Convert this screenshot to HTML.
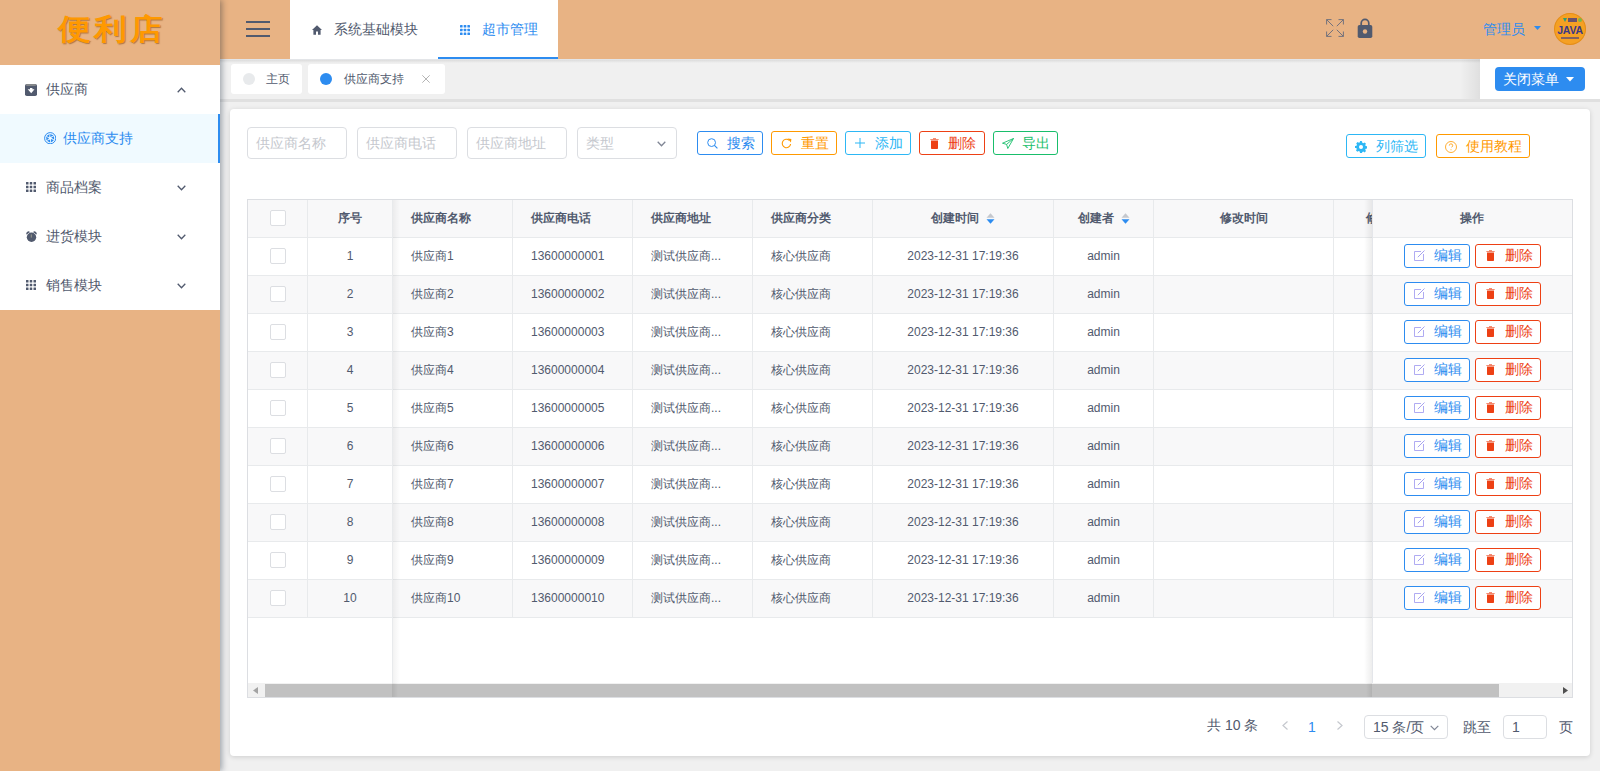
<!DOCTYPE html>
<html><head><meta charset="utf-8">
<style>
*{box-sizing:border-box;margin:0;padding:0}
html,body{width:1600px;height:771px;overflow:hidden}
body{position:relative;background:#f0f0f0;font-family:"Liberation Sans",sans-serif;font-size:14px;color:#515a6e}
.a{position:absolute}
#side{left:0;top:0;width:220px;height:771px;background:#e8b384;z-index:5;box-shadow:2px 0 6px rgba(0,21,41,.35)}
#logo{left:0;top:0;width:220px;height:65px;text-align:center;color:#ff9900;font-size:29px;font-weight:bold;letter-spacing:3px;text-indent:3px;line-height:58px;transform:scaleX(1.12);text-shadow:1px 1px 1px rgba(120,60,0,.5)}
#menu{left:0;top:65px;width:220px;height:245px;background:#fff}
.mi{position:absolute;left:0;width:220px;height:49px;line-height:49px;color:#515a6e}
.mi .t{position:absolute;left:46px;top:0}
.mi .ic{position:absolute;left:26px;top:19px;width:11px;height:11px}
.mi .chev{position:absolute;left:177px;top:22px;width:9px;height:6px}
.mi.act{background:#f0faff;color:#2d8cf0}
.mi.act::after{content:"";position:absolute;right:0;top:0;width:2px;height:49px;background:#2d8cf0}
#head{left:220px;top:0;width:1380px;height:59px;background:#e8b384;z-index:3}
#tagbar{left:220px;top:59px;width:1380px;height:43px;background:#f0f0f0;z-index:2}
.card{left:230px;top:109px;width:1360px;height:647px;background:#fff;border-radius:4px;box-shadow:0 1px 5px rgba(0,0,0,.15)}
.inp{border:1px solid #dcdee2;border-radius:4px;background:#fff}
.ph{left:8px;top:0;line-height:30px;color:#c5c8ce;font-size:14px}
.btn{height:24px;border:1px solid;border-radius:3px;background:#fff;line-height:22px;font-size:14px}
.tbl{border:1px solid #dcdee2;background:#fff;overflow:hidden;font-size:12px}
.hl{left:0;width:1324px;height:1px;background:#e8eaec}
.vl{width:1px;background:#e8eaec}
.cell{height:37px;line-height:36px;white-space:nowrap;overflow:visible;color:#515a6e}
.th{font-weight:bold;line-height:37px}
.chk{width:16px;height:16px;border:1px solid #dcdee2;border-radius:2px;background:#fff}
</style></head><body>
<div id="side" class="a">
  <div id="logo" class="a">便利店</div>
  <div id="menu" class="a">
    <div class="mi" style="top:0">
      <svg class="ic" viewBox="0 0 12 12" style="left:25px;top:19px;width:12px;height:12px"><rect x="0" y="0" width="12" height="12" rx="1.8" fill="#515a6e"/><rect x="1.2" y="0.3" width="9.6" height="1.4" fill="#9a9a96"/><path d="M5 4h2.4v1.3h2.1L6.2 9.2 2.7 5.3h2.3z" fill="#fff"/></svg>
      <span class="t">供应商</span>
      <svg class="chev" viewBox="0 0 9 6"><path d="M0.7 5.2L4.5 1.3 8.3 5.2" fill="none" stroke="#515a6e" stroke-width="1.3"/></svg>
    </div>
    <div class="mi act" style="top:49px">
      <svg class="ic" viewBox="0 0 12.4 12.4" style="left:44px;top:18px;width:12.4px;height:12.4px"><circle cx="6.2" cy="6.2" r="5.6" fill="none" stroke="#2d8cf0" stroke-width="1"/><path d="M6.20 5.00L6.35 1.90 9.59 3.55zM7.24 5.60L10.00 4.18 10.19 7.81zM7.24 6.80L9.85 8.48 6.80 10.46zM6.20 7.40L6.05 10.50 2.81 8.85zM5.16 6.80L2.40 8.22 2.21 4.59zM5.16 5.60L2.55 3.92 5.60 1.94z" fill="#2d8cf0"/></svg>
      <span class="t" style="left:63px">供应商支持</span>
    </div>
    <div class="mi" style="top:98px">
      <svg class="ic" viewBox="0 0 10 10" style="width:10px;height:10px;top:19px"><g fill="#515a6e"><rect x="0" y="0" width="2.5" height="2.5" rx=".3"/><rect x="3.75" y="0" width="2.5" height="2.5" rx=".3"/><rect x="7.5" y="0" width="2.5" height="2.5" rx=".3"/><rect x="0" y="3.75" width="2.5" height="2.5" rx=".3"/><rect x="3.75" y="3.75" width="2.5" height="2.5" rx=".3"/><rect x="7.5" y="3.75" width="2.5" height="2.5" rx=".3"/><rect x="0" y="7.5" width="2.5" height="2.5" rx=".3"/><rect x="3.75" y="7.5" width="2.5" height="2.5" rx=".3"/><rect x="7.5" y="7.5" width="2.5" height="2.5" rx=".3"/></g></svg>
      <span class="t">商品档案</span>
      <svg class="chev" viewBox="0 0 9 6"><path d="M0.7 0.8L4.5 4.7 8.3 0.8" fill="none" stroke="#515a6e" stroke-width="1.3"/></svg>
    </div>
    <div class="mi" style="top:147px">
      <svg class="ic" viewBox="0 0 11 11" style="top:19px;left:25.5px;width:11px;height:11px"><circle cx="5.5" cy="6.3" r="4.7" fill="#515a6e"/><path d="M0.3 3.2A2.3 2.3 0 0 1 3.5 0.6L3.6 1.5A5 5 0 0 0 1.1 3.5zM10.7 3.2A2.3 2.3 0 0 0 7.5 0.6L7.4 1.5A5 5 0 0 1 9.9 3.5z" fill="#515a6e"/><path d="M5.3 3.4v3.2" stroke="#b8b49a" stroke-width=".7"/></svg>
      <span class="t">进货模块</span>
      <svg class="chev" viewBox="0 0 9 6"><path d="M0.7 0.8L4.5 4.7 8.3 0.8" fill="none" stroke="#515a6e" stroke-width="1.3"/></svg>
    </div>
    <div class="mi" style="top:196px">
      <svg class="ic" viewBox="0 0 10 10" style="width:10px;height:10px;top:19px"><g fill="#515a6e"><rect x="0" y="0" width="2.5" height="2.5" rx=".3"/><rect x="3.75" y="0" width="2.5" height="2.5" rx=".3"/><rect x="7.5" y="0" width="2.5" height="2.5" rx=".3"/><rect x="0" y="3.75" width="2.5" height="2.5" rx=".3"/><rect x="3.75" y="3.75" width="2.5" height="2.5" rx=".3"/><rect x="7.5" y="3.75" width="2.5" height="2.5" rx=".3"/><rect x="0" y="7.5" width="2.5" height="2.5" rx=".3"/><rect x="3.75" y="7.5" width="2.5" height="2.5" rx=".3"/><rect x="7.5" y="7.5" width="2.5" height="2.5" rx=".3"/></g></svg>
      <span class="t">销售模块</span>
      <svg class="chev" viewBox="0 0 9 6"><path d="M0.7 0.8L4.5 4.7 8.3 0.8" fill="none" stroke="#515a6e" stroke-width="1.3"/></svg>
    </div>
  </div>
</div>

<div id="head" class="a">
  <div class="a" style="left:26px;top:21px;width:24px;height:2.2px;background:#515a6e"></div>
  <div class="a" style="left:26px;top:28px;width:24px;height:2.2px;background:#515a6e"></div>
  <div class="a" style="left:26px;top:35px;width:24px;height:2.2px;background:#515a6e"></div>
  <div class="a" style="left:70px;top:0;width:268px;height:59px;background:#fff">
    <svg class="a" style="left:22px;top:25px" width="10" height="10" viewBox="0 0 10 10"><path d="M5 0.3L0 5h1.4v4.7h2.6V6.6h2v3.1h2.6V5H10z" fill="#515a6e"/></svg>
    <span class="a" style="left:44px;top:0;line-height:58px;color:#515a6e">系统基础模块</span>
    <svg class="a" style="left:170px;top:25px" width="10" height="10" viewBox="0 0 10 10"><g fill="#2d8cf0"><rect x="0" y="0" width="2.6" height="2.6" rx=".6"/><rect x="3.7" y="0" width="2.6" height="2.6" rx=".6"/><rect x="7.4" y="0" width="2.6" height="2.6" rx=".6"/><rect x="0" y="3.7" width="2.6" height="2.6" rx=".6"/><rect x="3.7" y="3.7" width="2.6" height="2.6" rx=".6"/><rect x="7.4" y="3.7" width="2.6" height="2.6" rx=".6"/><rect x="0" y="7.4" width="2.6" height="2.6" rx=".6"/><rect x="3.7" y="7.4" width="2.6" height="2.6" rx=".6"/><rect x="7.4" y="7.4" width="2.6" height="2.6" rx=".6"/></g></svg>
    <span class="a" style="left:192px;top:0;line-height:58px;color:#2d8cf0">超市管理</span>
    <div class="a" style="left:148px;top:57px;width:120px;height:2px;background:#2d8cf0"></div>
  </div>
  <svg class="a" style="left:1106px;top:19px" width="18" height="18" viewBox="0 0 18 18"><g fill="none" stroke="#656b7c" stroke-width="0.9"><path d="M0.6 5.5V0.6H5.5M0.6 0.6L7.2 7.2"/><path d="M12.5 0.6H17.4V5.5M17.4 0.6L10.8 7.2"/><path d="M0.6 12.5V17.4H5.5M0.6 17.4L7.2 10.8"/><path d="M17.4 12.5V17.4H12.5M17.4 17.4L10.8 10.8"/></g></svg>
  <svg class="a" style="left:1137px;top:18px" width="16" height="21" viewBox="0 0 16 21"><path d="M4.2 8V5.2a3.8 3.8 0 0 1 7.6 0V8" fill="none" stroke="#515a6e" stroke-width="1.7"/><rect x="0.7" y="7" width="14.6" height="13" rx="1.8" fill="#515a6e"/><circle cx="8" cy="13.5" r="2.2" fill="#e8b384"/></svg>
  <span class="a" style="left:1263px;top:0;line-height:58px;color:#2d8cf0">管理员</span>
  <svg class="a" style="left:1314px;top:26px" width="7" height="4" viewBox="0 0 7 4"><path d="M0 0h7L3.5 4z" fill="#2d8cf0"/></svg>
  <div class="a" style="left:1334px;top:13px;width:32px;height:32px;border-radius:50%;background:#f5a023;overflow:hidden;box-shadow:inset 0 0 0 1px rgba(200,110,0,.35)">
    <div class="a" style="left:0;top:12px;width:32px;text-align:center;font-size:10.5px;font-weight:bold;color:#3b3887;line-height:10px;letter-spacing:-.2px">JAVA</div>
    <svg class="a" style="left:9px;top:5px" width="4" height="4" viewBox="0 0 4 4"><path d="M0 0h4L2 4z" fill="#2e9d72"/></svg>
    <div class="a" style="left:14px;top:5px;width:9px;height:4px;background:#3b3887;opacity:.75"></div>
    <div class="a" style="left:24px;top:5px;width:4px;height:4px;border-radius:50%;background:#7ab648"></div>
    <div class="a" style="left:7px;top:24px;width:18px;height:1.5px;background:#3b3887;opacity:.6"></div>
  </div>
</div>
<div id="tagbar" class="a">
  <div class="a" style="left:0;top:0;width:1380px;height:1px;background:#e3e5e8"></div><div class="a" style="left:0;top:1px;width:1380px;height:3px;background:linear-gradient(#dcdcdc,#f0f0f0)"></div>
  <div class="a" style="left:0;top:40px;width:1380px;height:3px;background:#e0e0e0"></div>
  <div class="a tag" style="left:11px;top:5px;width:71px;height:30px;background:#fff;border-radius:3px">
    <div class="a" style="left:12px;top:9px;width:12px;height:12px;border-radius:50%;background:#e8eaec"></div>
    <span class="a" style="left:35px;top:0;line-height:30px;font-size:12px;color:#515a6e">主页</span>
  </div>
  <div class="a tag" style="left:88px;top:5px;width:137px;height:30px;background:#fff;border-radius:3px">
    <div class="a" style="left:12px;top:9px;width:12px;height:12px;border-radius:50%;background:#2d8cf0"></div>
    <span class="a" style="left:36px;top:0;line-height:30px;font-size:12px;color:#515a6e">供应商支持</span>
    <svg class="a" style="left:114px;top:11px" width="8" height="8" viewBox="0 0 8 8"><path d="M.3 .3l7.4 7.4M7.7 .3l-7.4 7.4" stroke="#b5b5b5" stroke-width="1"/></svg>
  </div>
  <div class="a" style="left:1240px;top:0px;width:20px;height:40px;background:linear-gradient(90deg,rgba(0,0,0,0),rgba(0,0,0,.07))"></div>
  <div class="a" style="left:1260px;top:0px;width:120px;height:40px;background:#fff">
    <div class="a" style="left:15px;top:8px;width:90px;height:24px;border-radius:4px;background:#2d8cf0">
      <span class="a" style="left:8px;top:0;line-height:24px;color:#fff">关闭菜单</span>
      <svg class="a" style="left:71px;top:10px" width="8" height="5" viewBox="0 0 8 5"><path d="M0 0h8L4 4.5z" fill="#fff"/></svg>
    </div>
  </div>
</div>
<div class="a card">
<div class="a inp" style="left:17px;top:18px;width:100px;height:32px"><span class="a ph">供应商名称</span></div>
<div class="a inp" style="left:127px;top:18px;width:100px;height:32px"><span class="a ph">供应商电话</span></div>
<div class="a inp" style="left:237px;top:18px;width:100px;height:32px"><span class="a ph">供应商地址</span></div>
<div class="a inp" style="left:347px;top:18px;width:100px;height:32px"><span class="a ph">类型</span><svg class="a" style="left:79px;top:13px" width="9" height="6" viewBox="0 0 9 6"><path d="M.7 .8L4.5 4.7 8.3 .8" fill="none" stroke="#808695" stroke-width="1.3"/></svg></div>
<div class="a btn" style="left:467px;top:22px;width:66px;border-color:#2d8cf0;color:#2d8cf0"><svg class="a" style="left:9px;top:5.5px" width="11" height="11" viewBox="0 0 11 11"><circle cx="4.6" cy="4.6" r="3.9" fill="none" stroke="#2d8cf0" stroke-width="1"/><path d="M7.4 7.4L10.4 10.4" stroke="#2d8cf0" stroke-width="1.1"/></svg><span class="a" style="left:29px;top:0">搜索</span></div>
<div class="a btn" style="left:541px;top:22px;width:66px;border-color:#ff9900;color:#ff9900"><svg class="a" style="left:9px;top:5.5px" width="11" height="11" viewBox="0 0 11 11"><path d="M9.6 6A4.2 4.2 0 1 1 8.3 2.4" fill="none" stroke="#ff9900" stroke-width="1.1"/><path d="M6.6 0.6L10.4 0.9 9.9 4.6z" fill="#ff9900"/></svg><span class="a" style="left:29px;top:0">重置</span></div>
<div class="a btn" style="left:615px;top:22px;width:66px;border-color:#2db7f5;color:#2db7f5"><svg class="a" style="left:9px;top:5.5px" width="10" height="10" viewBox="0 0 10 10"><path d="M5 0V10M0 5H10" stroke="#2db7f5" stroke-width="1"/></svg><span class="a" style="left:29px;top:0">添加</span></div>
<div class="a btn" style="left:689px;top:22px;width:66px;border-color:#ed4014;color:#ed4014"><svg class="a" style="left:10px;top:5.5px" width="9" height="11" viewBox="0 0 9 11"><rect x="0.3" y="1" width="8.4" height="1" fill="#ed4014" opacity=".6"/><rect x="3" y="0" width="3" height="1.2" fill="#ed4014" opacity=".6"/><path d="M1 2.6H8V10.2Q8 11 7.2 11H1.8Q1 11 1 10.2z" fill="#ed4014"/></svg><span class="a" style="left:28px;top:0">删除</span></div>
<div class="a btn" style="left:763px;top:22px;width:65px;border-color:#19be6b;color:#19be6b"><svg class="a" style="left:8px;top:5.5px" width="12" height="11" viewBox="0 0 12 11"><path d="M11.5 0.5L0.5 5.2 4.6 6.4 5.8 10.5z M11.5 0.5L4.6 6.4" fill="none" stroke="#19be6b" stroke-width="0.9" stroke-linejoin="round"/></svg><span class="a" style="left:28px;top:0">导出</span></div>
<div class="a btn" style="left:1116px;top:25px;width:80px;border-color:#2db7f5;color:#2db7f5"><svg class="a" style="left:8px;top:5.5px" width="12" height="12" viewBox="0 0 12 12"><path d="M6 0l1 .2.3 1.5 1 .5 1.3-.8 1.4 1.4-.8 1.3.5 1 1.5.3v2l-1.5.3-.5 1 .8 1.3-1.4 1.4-1.3-.8-1 .5L7 12H5l-.3-1.5-1-.5-1.3.8-1.4-1.4.8-1.3-.5-1L0 7V5l1.5-.3.5-1-.8-1.3 1.4-1.4 1.3.8 1-.5L5 0z" fill="#2db7f5"/><circle cx="6" cy="6" r="2" fill="#fff"/></svg><span class="a" style="left:29px;top:0">列筛选</span></div>
<div class="a btn" style="left:1206px;top:25px;width:94px;border-color:#ff9900;color:#ff9900"><svg class="a" style="left:8px;top:5.5px" width="12" height="12" viewBox="0 0 12 12"><circle cx="6" cy="6" r="5.5" fill="none" stroke="#ff9900" stroke-width=".8"/><path d="M4.3 4.6A1.7 1.7 0 1 1 6.4 6.2#ff99006 6.4 6 6.7 6 7.3" fill="none" stroke="#ff9900" stroke-width=".8"/><circle cx="6" cy="8.8" r=".5" fill="#ff9900"/></svg><span class="a" style="left:29px;top:0">使用教程</span></div>
<div class="a tbl" style="left:17px;top:90px;width:1326px;height:499px">
<div class="a" style="left:0;top:0;width:1324px;height:37px;background:#f8f8f9"></div>
<div class="a" style="left:0;top:38px;width:1324px;height:37px;background:#fff"></div>
<div class="a" style="left:0;top:76px;width:1324px;height:37px;background:#f8f8f9"></div>
<div class="a" style="left:0;top:114px;width:1324px;height:37px;background:#fff"></div>
<div class="a" style="left:0;top:152px;width:1324px;height:37px;background:#f8f8f9"></div>
<div class="a" style="left:0;top:190px;width:1324px;height:37px;background:#fff"></div>
<div class="a" style="left:0;top:228px;width:1324px;height:37px;background:#f8f8f9"></div>
<div class="a" style="left:0;top:266px;width:1324px;height:37px;background:#fff"></div>
<div class="a" style="left:0;top:304px;width:1324px;height:37px;background:#f8f8f9"></div>
<div class="a" style="left:0;top:342px;width:1324px;height:37px;background:#fff"></div>
<div class="a" style="left:0;top:380px;width:1324px;height:37px;background:#f8f8f9"></div>
<div class="a hl" style="top:37px"></div>
<div class="a hl" style="top:75px"></div>
<div class="a hl" style="top:113px"></div>
<div class="a hl" style="top:151px"></div>
<div class="a hl" style="top:189px"></div>
<div class="a hl" style="top:227px"></div>
<div class="a hl" style="top:265px"></div>
<div class="a hl" style="top:303px"></div>
<div class="a hl" style="top:341px"></div>
<div class="a hl" style="top:379px"></div>
<div class="a hl" style="top:417px"></div>
<div class="a vl" style="left:59px;top:0;height:417px"></div>
<div class="a vl" style="left:144px;top:0;height:417px"></div>
<div class="a vl" style="left:264px;top:0;height:417px"></div>
<div class="a vl" style="left:384px;top:0;height:417px"></div>
<div class="a vl" style="left:504px;top:0;height:417px"></div>
<div class="a vl" style="left:624px;top:0;height:417px"></div>
<div class="a vl" style="left:805px;top:0;height:417px"></div>
<div class="a vl" style="left:905px;top:0;height:417px"></div>
<div class="a vl" style="left:1085px;top:0;height:417px"></div>
<div class="a vl" style="left:1185px;top:0;height:417px"></div>
<div class="a chk" style="left:22px;top:10px"></div>
<div class="a cell th" style="left:60px;top:0px;width:84px;text-align:center">序号</div>
<div class="a cell th" style="left:145px;top:0px;width:119px;padding-left:18px;text-align:left">供应商名称</div>
<div class="a cell th" style="left:265px;top:0px;width:119px;padding-left:18px;text-align:left">供应商电话</div>
<div class="a cell th" style="left:385px;top:0px;width:119px;padding-left:18px;text-align:left">供应商地址</div>
<div class="a cell th" style="left:505px;top:0px;width:119px;padding-left:18px;text-align:left">供应商分类</div>
<div class="a cell th" style="left:625px;top:0px;width:180px;text-align:center">创建时间<svg style="display:inline-block;vertical-align:top;margin:13px 0 0 7px" width="9" height="11" viewBox="0 0 9 11"><path d="M0.5 4.8L4.5 0.2 8.5 4.8z" fill="#c5c8ce"/><path d="M0.5 6.2L4.5 10.8 8.5 6.2z" fill="#2d8cf0"/></svg></div>
<div class="a cell th" style="left:806px;top:0px;width:99px;text-align:center">创建者<svg style="display:inline-block;vertical-align:top;margin:13px 0 0 7px" width="9" height="11" viewBox="0 0 9 11"><path d="M0.5 4.8L4.5 0.2 8.5 4.8z" fill="#c5c8ce"/><path d="M0.5 6.2L4.5 10.8 8.5 6.2z" fill="#2d8cf0"/></svg></div>
<div class="a cell th" style="left:906px;top:0px;width:179px;text-align:center">修改时间</div>
<div class="a cell th" style="left:1086px;top:0px;width:99px;text-align:center">修改者</div>
<div class="a chk" style="left:22px;top:48px"></div>
<div class="a cell " style="left:60px;top:38px;width:84px;text-align:center">1</div>
<div class="a cell " style="left:145px;top:38px;width:119px;padding-left:18px;text-align:left">供应商1</div>
<div class="a cell " style="left:265px;top:38px;width:119px;padding-left:18px;text-align:left">13600000001</div>
<div class="a cell " style="left:385px;top:38px;width:119px;padding-left:18px;text-align:left">测试供应商...</div>
<div class="a cell " style="left:505px;top:38px;width:119px;padding-left:18px;text-align:left">核心供应商</div>
<div class="a cell " style="left:625px;top:38px;width:180px;text-align:center">2023-12-31 17:19:36</div>
<div class="a cell " style="left:806px;top:38px;width:99px;text-align:center">admin</div>
<div class="a chk" style="left:22px;top:86px"></div>
<div class="a cell " style="left:60px;top:76px;width:84px;text-align:center">2</div>
<div class="a cell " style="left:145px;top:76px;width:119px;padding-left:18px;text-align:left">供应商2</div>
<div class="a cell " style="left:265px;top:76px;width:119px;padding-left:18px;text-align:left">13600000002</div>
<div class="a cell " style="left:385px;top:76px;width:119px;padding-left:18px;text-align:left">测试供应商...</div>
<div class="a cell " style="left:505px;top:76px;width:119px;padding-left:18px;text-align:left">核心供应商</div>
<div class="a cell " style="left:625px;top:76px;width:180px;text-align:center">2023-12-31 17:19:36</div>
<div class="a cell " style="left:806px;top:76px;width:99px;text-align:center">admin</div>
<div class="a chk" style="left:22px;top:124px"></div>
<div class="a cell " style="left:60px;top:114px;width:84px;text-align:center">3</div>
<div class="a cell " style="left:145px;top:114px;width:119px;padding-left:18px;text-align:left">供应商3</div>
<div class="a cell " style="left:265px;top:114px;width:119px;padding-left:18px;text-align:left">13600000003</div>
<div class="a cell " style="left:385px;top:114px;width:119px;padding-left:18px;text-align:left">测试供应商...</div>
<div class="a cell " style="left:505px;top:114px;width:119px;padding-left:18px;text-align:left">核心供应商</div>
<div class="a cell " style="left:625px;top:114px;width:180px;text-align:center">2023-12-31 17:19:36</div>
<div class="a cell " style="left:806px;top:114px;width:99px;text-align:center">admin</div>
<div class="a chk" style="left:22px;top:162px"></div>
<div class="a cell " style="left:60px;top:152px;width:84px;text-align:center">4</div>
<div class="a cell " style="left:145px;top:152px;width:119px;padding-left:18px;text-align:left">供应商4</div>
<div class="a cell " style="left:265px;top:152px;width:119px;padding-left:18px;text-align:left">13600000004</div>
<div class="a cell " style="left:385px;top:152px;width:119px;padding-left:18px;text-align:left">测试供应商...</div>
<div class="a cell " style="left:505px;top:152px;width:119px;padding-left:18px;text-align:left">核心供应商</div>
<div class="a cell " style="left:625px;top:152px;width:180px;text-align:center">2023-12-31 17:19:36</div>
<div class="a cell " style="left:806px;top:152px;width:99px;text-align:center">admin</div>
<div class="a chk" style="left:22px;top:200px"></div>
<div class="a cell " style="left:60px;top:190px;width:84px;text-align:center">5</div>
<div class="a cell " style="left:145px;top:190px;width:119px;padding-left:18px;text-align:left">供应商5</div>
<div class="a cell " style="left:265px;top:190px;width:119px;padding-left:18px;text-align:left">13600000005</div>
<div class="a cell " style="left:385px;top:190px;width:119px;padding-left:18px;text-align:left">测试供应商...</div>
<div class="a cell " style="left:505px;top:190px;width:119px;padding-left:18px;text-align:left">核心供应商</div>
<div class="a cell " style="left:625px;top:190px;width:180px;text-align:center">2023-12-31 17:19:36</div>
<div class="a cell " style="left:806px;top:190px;width:99px;text-align:center">admin</div>
<div class="a chk" style="left:22px;top:238px"></div>
<div class="a cell " style="left:60px;top:228px;width:84px;text-align:center">6</div>
<div class="a cell " style="left:145px;top:228px;width:119px;padding-left:18px;text-align:left">供应商6</div>
<div class="a cell " style="left:265px;top:228px;width:119px;padding-left:18px;text-align:left">13600000006</div>
<div class="a cell " style="left:385px;top:228px;width:119px;padding-left:18px;text-align:left">测试供应商...</div>
<div class="a cell " style="left:505px;top:228px;width:119px;padding-left:18px;text-align:left">核心供应商</div>
<div class="a cell " style="left:625px;top:228px;width:180px;text-align:center">2023-12-31 17:19:36</div>
<div class="a cell " style="left:806px;top:228px;width:99px;text-align:center">admin</div>
<div class="a chk" style="left:22px;top:276px"></div>
<div class="a cell " style="left:60px;top:266px;width:84px;text-align:center">7</div>
<div class="a cell " style="left:145px;top:266px;width:119px;padding-left:18px;text-align:left">供应商7</div>
<div class="a cell " style="left:265px;top:266px;width:119px;padding-left:18px;text-align:left">13600000007</div>
<div class="a cell " style="left:385px;top:266px;width:119px;padding-left:18px;text-align:left">测试供应商...</div>
<div class="a cell " style="left:505px;top:266px;width:119px;padding-left:18px;text-align:left">核心供应商</div>
<div class="a cell " style="left:625px;top:266px;width:180px;text-align:center">2023-12-31 17:19:36</div>
<div class="a cell " style="left:806px;top:266px;width:99px;text-align:center">admin</div>
<div class="a chk" style="left:22px;top:314px"></div>
<div class="a cell " style="left:60px;top:304px;width:84px;text-align:center">8</div>
<div class="a cell " style="left:145px;top:304px;width:119px;padding-left:18px;text-align:left">供应商8</div>
<div class="a cell " style="left:265px;top:304px;width:119px;padding-left:18px;text-align:left">13600000008</div>
<div class="a cell " style="left:385px;top:304px;width:119px;padding-left:18px;text-align:left">测试供应商...</div>
<div class="a cell " style="left:505px;top:304px;width:119px;padding-left:18px;text-align:left">核心供应商</div>
<div class="a cell " style="left:625px;top:304px;width:180px;text-align:center">2023-12-31 17:19:36</div>
<div class="a cell " style="left:806px;top:304px;width:99px;text-align:center">admin</div>
<div class="a chk" style="left:22px;top:352px"></div>
<div class="a cell " style="left:60px;top:342px;width:84px;text-align:center">9</div>
<div class="a cell " style="left:145px;top:342px;width:119px;padding-left:18px;text-align:left">供应商9</div>
<div class="a cell " style="left:265px;top:342px;width:119px;padding-left:18px;text-align:left">13600000009</div>
<div class="a cell " style="left:385px;top:342px;width:119px;padding-left:18px;text-align:left">测试供应商...</div>
<div class="a cell " style="left:505px;top:342px;width:119px;padding-left:18px;text-align:left">核心供应商</div>
<div class="a cell " style="left:625px;top:342px;width:180px;text-align:center">2023-12-31 17:19:36</div>
<div class="a cell " style="left:806px;top:342px;width:99px;text-align:center">admin</div>
<div class="a chk" style="left:22px;top:390px"></div>
<div class="a cell " style="left:60px;top:380px;width:84px;text-align:center">10</div>
<div class="a cell " style="left:145px;top:380px;width:119px;padding-left:18px;text-align:left">供应商10</div>
<div class="a cell " style="left:265px;top:380px;width:119px;padding-left:18px;text-align:left">13600000010</div>
<div class="a cell " style="left:385px;top:380px;width:119px;padding-left:18px;text-align:left">测试供应商...</div>
<div class="a cell " style="left:505px;top:380px;width:119px;padding-left:18px;text-align:left">核心供应商</div>
<div class="a cell " style="left:625px;top:380px;width:180px;text-align:center">2023-12-31 17:19:36</div>
<div class="a cell " style="left:806px;top:380px;width:99px;text-align:center">admin</div>
<div class="a" style="left:144px;top:0;width:8px;height:497px;background:linear-gradient(90deg,rgba(0,0,0,.06),rgba(0,0,0,0))"></div>
<div class="a vl" style="left:144px;top:0;height:497px"></div>
<div class="a" style="left:1116px;top:0;width:8px;height:497px;background:linear-gradient(270deg,rgba(0,0,0,.07),rgba(0,0,0,0))"></div>
<div class="a" style="left:1124px;top:0;width:200px;height:417px;background:#fff">
<div class="a" style="left:0;top:0;width:200px;height:37px;background:#f8f8f9"></div>
<div class="a" style="left:0;top:38px;width:200px;height:37px;background:#fff"></div>
<div class="a" style="left:0;top:76px;width:200px;height:37px;background:#f8f8f9"></div>
<div class="a" style="left:0;top:114px;width:200px;height:37px;background:#fff"></div>
<div class="a" style="left:0;top:152px;width:200px;height:37px;background:#f8f8f9"></div>
<div class="a" style="left:0;top:190px;width:200px;height:37px;background:#fff"></div>
<div class="a" style="left:0;top:228px;width:200px;height:37px;background:#f8f8f9"></div>
<div class="a" style="left:0;top:266px;width:200px;height:37px;background:#fff"></div>
<div class="a" style="left:0;top:304px;width:200px;height:37px;background:#f8f8f9"></div>
<div class="a" style="left:0;top:342px;width:200px;height:37px;background:#fff"></div>
<div class="a" style="left:0;top:380px;width:200px;height:37px;background:#f8f8f9"></div>
<div class="a hl" style="top:37px;width:200px"></div>
<div class="a hl" style="top:75px;width:200px"></div>
<div class="a hl" style="top:113px;width:200px"></div>
<div class="a hl" style="top:151px;width:200px"></div>
<div class="a hl" style="top:189px;width:200px"></div>
<div class="a hl" style="top:227px;width:200px"></div>
<div class="a hl" style="top:265px;width:200px"></div>
<div class="a hl" style="top:303px;width:200px"></div>
<div class="a hl" style="top:341px;width:200px"></div>
<div class="a hl" style="top:379px;width:200px"></div>
<div class="a hl" style="top:417px;width:200px"></div>
<div class="a cell th" style="left:0;top:0;width:200px;text-align:center">操作</div>
<div class="a btn" style="left:32px;top:44px;width:66px;border-color:#2d8cf0;color:#2d8cf0"><svg class="a" style="left:9px;top:5px" width="11" height="11" viewBox="0 0 11 11"><path d="M7 1.5H0.5V10.5H9.5V4" fill="none" stroke="#a7a2f0" stroke-width=".9"/><path d="M3.8 7.2L10.5 0.5" stroke="#a7a2f0" stroke-width="1"/></svg><span class="a" style="left:29px;top:-1px">编辑</span></div>
<div class="a btn" style="left:103px;top:44px;width:66px;border-color:#ed4014;color:#ed4014"><svg class="a" style="left:10px;top:5px" width="9" height="11" viewBox="0 0 9 11"><rect x="0.3" y="1" width="8.4" height="1" fill="#ed4014" opacity=".6"/><rect x="3" y="0" width="3" height="1.2" fill="#ed4014" opacity=".6"/><path d="M1 2.6H8V10.2Q8 11 7.2 11H1.8Q1 11 1 10.2z" fill="#ed4014"/></svg><span class="a" style="left:29px;top:-1px">删除</span></div>
<div class="a btn" style="left:32px;top:82px;width:66px;border-color:#2d8cf0;color:#2d8cf0"><svg class="a" style="left:9px;top:5px" width="11" height="11" viewBox="0 0 11 11"><path d="M7 1.5H0.5V10.5H9.5V4" fill="none" stroke="#a7a2f0" stroke-width=".9"/><path d="M3.8 7.2L10.5 0.5" stroke="#a7a2f0" stroke-width="1"/></svg><span class="a" style="left:29px;top:-1px">编辑</span></div>
<div class="a btn" style="left:103px;top:82px;width:66px;border-color:#ed4014;color:#ed4014"><svg class="a" style="left:10px;top:5px" width="9" height="11" viewBox="0 0 9 11"><rect x="0.3" y="1" width="8.4" height="1" fill="#ed4014" opacity=".6"/><rect x="3" y="0" width="3" height="1.2" fill="#ed4014" opacity=".6"/><path d="M1 2.6H8V10.2Q8 11 7.2 11H1.8Q1 11 1 10.2z" fill="#ed4014"/></svg><span class="a" style="left:29px;top:-1px">删除</span></div>
<div class="a btn" style="left:32px;top:120px;width:66px;border-color:#2d8cf0;color:#2d8cf0"><svg class="a" style="left:9px;top:5px" width="11" height="11" viewBox="0 0 11 11"><path d="M7 1.5H0.5V10.5H9.5V4" fill="none" stroke="#a7a2f0" stroke-width=".9"/><path d="M3.8 7.2L10.5 0.5" stroke="#a7a2f0" stroke-width="1"/></svg><span class="a" style="left:29px;top:-1px">编辑</span></div>
<div class="a btn" style="left:103px;top:120px;width:66px;border-color:#ed4014;color:#ed4014"><svg class="a" style="left:10px;top:5px" width="9" height="11" viewBox="0 0 9 11"><rect x="0.3" y="1" width="8.4" height="1" fill="#ed4014" opacity=".6"/><rect x="3" y="0" width="3" height="1.2" fill="#ed4014" opacity=".6"/><path d="M1 2.6H8V10.2Q8 11 7.2 11H1.8Q1 11 1 10.2z" fill="#ed4014"/></svg><span class="a" style="left:29px;top:-1px">删除</span></div>
<div class="a btn" style="left:32px;top:158px;width:66px;border-color:#2d8cf0;color:#2d8cf0"><svg class="a" style="left:9px;top:5px" width="11" height="11" viewBox="0 0 11 11"><path d="M7 1.5H0.5V10.5H9.5V4" fill="none" stroke="#a7a2f0" stroke-width=".9"/><path d="M3.8 7.2L10.5 0.5" stroke="#a7a2f0" stroke-width="1"/></svg><span class="a" style="left:29px;top:-1px">编辑</span></div>
<div class="a btn" style="left:103px;top:158px;width:66px;border-color:#ed4014;color:#ed4014"><svg class="a" style="left:10px;top:5px" width="9" height="11" viewBox="0 0 9 11"><rect x="0.3" y="1" width="8.4" height="1" fill="#ed4014" opacity=".6"/><rect x="3" y="0" width="3" height="1.2" fill="#ed4014" opacity=".6"/><path d="M1 2.6H8V10.2Q8 11 7.2 11H1.8Q1 11 1 10.2z" fill="#ed4014"/></svg><span class="a" style="left:29px;top:-1px">删除</span></div>
<div class="a btn" style="left:32px;top:196px;width:66px;border-color:#2d8cf0;color:#2d8cf0"><svg class="a" style="left:9px;top:5px" width="11" height="11" viewBox="0 0 11 11"><path d="M7 1.5H0.5V10.5H9.5V4" fill="none" stroke="#a7a2f0" stroke-width=".9"/><path d="M3.8 7.2L10.5 0.5" stroke="#a7a2f0" stroke-width="1"/></svg><span class="a" style="left:29px;top:-1px">编辑</span></div>
<div class="a btn" style="left:103px;top:196px;width:66px;border-color:#ed4014;color:#ed4014"><svg class="a" style="left:10px;top:5px" width="9" height="11" viewBox="0 0 9 11"><rect x="0.3" y="1" width="8.4" height="1" fill="#ed4014" opacity=".6"/><rect x="3" y="0" width="3" height="1.2" fill="#ed4014" opacity=".6"/><path d="M1 2.6H8V10.2Q8 11 7.2 11H1.8Q1 11 1 10.2z" fill="#ed4014"/></svg><span class="a" style="left:29px;top:-1px">删除</span></div>
<div class="a btn" style="left:32px;top:234px;width:66px;border-color:#2d8cf0;color:#2d8cf0"><svg class="a" style="left:9px;top:5px" width="11" height="11" viewBox="0 0 11 11"><path d="M7 1.5H0.5V10.5H9.5V4" fill="none" stroke="#a7a2f0" stroke-width=".9"/><path d="M3.8 7.2L10.5 0.5" stroke="#a7a2f0" stroke-width="1"/></svg><span class="a" style="left:29px;top:-1px">编辑</span></div>
<div class="a btn" style="left:103px;top:234px;width:66px;border-color:#ed4014;color:#ed4014"><svg class="a" style="left:10px;top:5px" width="9" height="11" viewBox="0 0 9 11"><rect x="0.3" y="1" width="8.4" height="1" fill="#ed4014" opacity=".6"/><rect x="3" y="0" width="3" height="1.2" fill="#ed4014" opacity=".6"/><path d="M1 2.6H8V10.2Q8 11 7.2 11H1.8Q1 11 1 10.2z" fill="#ed4014"/></svg><span class="a" style="left:29px;top:-1px">删除</span></div>
<div class="a btn" style="left:32px;top:272px;width:66px;border-color:#2d8cf0;color:#2d8cf0"><svg class="a" style="left:9px;top:5px" width="11" height="11" viewBox="0 0 11 11"><path d="M7 1.5H0.5V10.5H9.5V4" fill="none" stroke="#a7a2f0" stroke-width=".9"/><path d="M3.8 7.2L10.5 0.5" stroke="#a7a2f0" stroke-width="1"/></svg><span class="a" style="left:29px;top:-1px">编辑</span></div>
<div class="a btn" style="left:103px;top:272px;width:66px;border-color:#ed4014;color:#ed4014"><svg class="a" style="left:10px;top:5px" width="9" height="11" viewBox="0 0 9 11"><rect x="0.3" y="1" width="8.4" height="1" fill="#ed4014" opacity=".6"/><rect x="3" y="0" width="3" height="1.2" fill="#ed4014" opacity=".6"/><path d="M1 2.6H8V10.2Q8 11 7.2 11H1.8Q1 11 1 10.2z" fill="#ed4014"/></svg><span class="a" style="left:29px;top:-1px">删除</span></div>
<div class="a btn" style="left:32px;top:310px;width:66px;border-color:#2d8cf0;color:#2d8cf0"><svg class="a" style="left:9px;top:5px" width="11" height="11" viewBox="0 0 11 11"><path d="M7 1.5H0.5V10.5H9.5V4" fill="none" stroke="#a7a2f0" stroke-width=".9"/><path d="M3.8 7.2L10.5 0.5" stroke="#a7a2f0" stroke-width="1"/></svg><span class="a" style="left:29px;top:-1px">编辑</span></div>
<div class="a btn" style="left:103px;top:310px;width:66px;border-color:#ed4014;color:#ed4014"><svg class="a" style="left:10px;top:5px" width="9" height="11" viewBox="0 0 9 11"><rect x="0.3" y="1" width="8.4" height="1" fill="#ed4014" opacity=".6"/><rect x="3" y="0" width="3" height="1.2" fill="#ed4014" opacity=".6"/><path d="M1 2.6H8V10.2Q8 11 7.2 11H1.8Q1 11 1 10.2z" fill="#ed4014"/></svg><span class="a" style="left:29px;top:-1px">删除</span></div>
<div class="a btn" style="left:32px;top:348px;width:66px;border-color:#2d8cf0;color:#2d8cf0"><svg class="a" style="left:9px;top:5px" width="11" height="11" viewBox="0 0 11 11"><path d="M7 1.5H0.5V10.5H9.5V4" fill="none" stroke="#a7a2f0" stroke-width=".9"/><path d="M3.8 7.2L10.5 0.5" stroke="#a7a2f0" stroke-width="1"/></svg><span class="a" style="left:29px;top:-1px">编辑</span></div>
<div class="a btn" style="left:103px;top:348px;width:66px;border-color:#ed4014;color:#ed4014"><svg class="a" style="left:10px;top:5px" width="9" height="11" viewBox="0 0 9 11"><rect x="0.3" y="1" width="8.4" height="1" fill="#ed4014" opacity=".6"/><rect x="3" y="0" width="3" height="1.2" fill="#ed4014" opacity=".6"/><path d="M1 2.6H8V10.2Q8 11 7.2 11H1.8Q1 11 1 10.2z" fill="#ed4014"/></svg><span class="a" style="left:29px;top:-1px">删除</span></div>
<div class="a btn" style="left:32px;top:386px;width:66px;border-color:#2d8cf0;color:#2d8cf0"><svg class="a" style="left:9px;top:5px" width="11" height="11" viewBox="0 0 11 11"><path d="M7 1.5H0.5V10.5H9.5V4" fill="none" stroke="#a7a2f0" stroke-width=".9"/><path d="M3.8 7.2L10.5 0.5" stroke="#a7a2f0" stroke-width="1"/></svg><span class="a" style="left:29px;top:-1px">编辑</span></div>
<div class="a btn" style="left:103px;top:386px;width:66px;border-color:#ed4014;color:#ed4014"><svg class="a" style="left:10px;top:5px" width="9" height="11" viewBox="0 0 9 11"><rect x="0.3" y="1" width="8.4" height="1" fill="#ed4014" opacity=".6"/><rect x="3" y="0" width="3" height="1.2" fill="#ed4014" opacity=".6"/><path d="M1 2.6H8V10.2Q8 11 7.2 11H1.8Q1 11 1 10.2z" fill="#ed4014"/></svg><span class="a" style="left:29px;top:-1px">删除</span></div>
</div>
<div class="a vl" style="left:1124px;top:0;height:497px;background:#e4e6ea"></div>
<div class="a" style="left:0;top:483px;width:1324px;height:14px;background:#f1f1f1"></div>
<div class="a" style="left:17px;top:484px;width:1234px;height:13px;background:#c1c1c1"></div>
<svg class="a" style="left:5px;top:487px" width="5" height="7" viewBox="0 0 5 7"><path d="M5 0V7L0 3.5z" fill="#a3a3a3"/></svg>
<svg class="a" style="left:1315px;top:487px" width="5" height="7" viewBox="0 0 5 7"><path d="M0 0V7L5 3.5z" fill="#505050"/></svg>
<div class="a" style="left:144px;top:483px;width:6px;height:14px;background:linear-gradient(90deg,rgba(0,0,0,.08),rgba(0,0,0,0))"></div>
<div class="a" style="left:1118px;top:483px;width:6px;height:14px;background:linear-gradient(270deg,rgba(0,0,0,.08),rgba(0,0,0,0))"></div>
</div>
<span class="a" style="left:977px;top:604px;line-height:24px;">共 10 条</span>
<svg class="a" style="left:1052px;top:612px" width="6" height="9" viewBox="0 0 6 9"><path d="M5.5 .5L1 4.5 5.5 8.5" fill="none" stroke="#c5c8ce" stroke-width="1.2"/></svg>
<span class="a" style="left:1078px;top:606px;line-height:24px;color:#2d8cf0">1</span>
<svg class="a" style="left:1107px;top:612px" width="6" height="9" viewBox="0 0 6 9"><path d="M.5 .5L5 4.5 .5 8.5" fill="none" stroke="#c5c8ce" stroke-width="1.2"/></svg>
<div class="a inp" style="left:1134px;top:606px;width:84px;height:24px"><span class="a" style="left:8px;top:0;line-height:22px;color:#515a6e">15 条/页</span><svg class="a" style="left:65px;top:9px" width="9" height="6" viewBox="0 0 9 6"><path d="M.7 .8L4.5 4.7 8.3 .8" fill="none" stroke="#808695" stroke-width="1.2"/></svg></div>
<span class="a" style="left:1233px;top:606px;line-height:24px;">跳至</span>
<div class="a inp" style="left:1273px;top:606px;width:44px;height:24px"><span class="a" style="left:8px;top:0;line-height:22px;color:#515a6e">1</span></div>
<span class="a" style="left:1329px;top:606px;line-height:24px;">页</span>
</div>
</body></html>
